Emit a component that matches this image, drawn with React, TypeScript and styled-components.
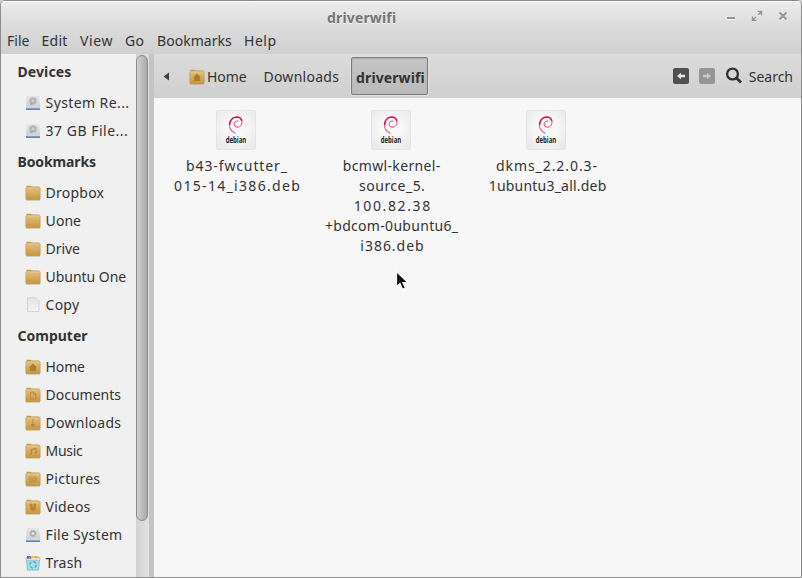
import React from 'react';
import styled, { createGlobalStyle } from 'styled-components';

const GlobalStyle = createGlobalStyle`
  html, body { margin: 0; background: #d0d0d0; }
  * { box-sizing: border-box; }
`;

const Window = styled.main`
  position: relative;
  display: flex;
  flex-direction: column;
  width: 802px;
  height: 578px;
  overflow: hidden;
  border: 1px solid #8d8d8d;
  border-radius: 5px 5px 0 0;
  background: #f7f7f7;
  color: #333;
  font: 14px/20px 'Noto Sans', 'Open Sans', sans-serif;
  white-space: nowrap;
  cursor: default;
`;

const Header = styled.header`
  flex: 0 0 53px;
  background: linear-gradient(#ececec, #dcdcdc 45%, #d0d0d0);
  box-shadow: inset 0 1px #fbfbfb;
`;

const TitleBar = styled.div`
  display: flex;
  height: 27px;
  padding: 7px 12px 0 326px;
  color: #757575;
`;

const Title = styled.h1`
  flex: 1;
  margin: 0;
  font-size: 14px;
  line-height: 20px;
  letter-spacing: 0.16px;
  text-shadow: 0 1px #f4f4f4;
`;

const WindowButtons = styled.div`
  display: flex;
  align-items: center;
  gap: 14px;
  height: 15px;
  svg { display: block; }
`;

const MenuBar = styled.nav`
  display: flex;
  height: 26px;
  padding-left: 6px;
  line-height: 26px;
`;

const MenuItem = styled.span<{ $width: number; $spacing: number }>`
  width: ${p => p.$width}px;
  letter-spacing: ${p => p.$spacing}px;
`;

const Body = styled.div`
  display: flex;
  flex: 1;
  min-height: 0;
`;

const Sidebar = styled.aside`
  flex: 0 0 135px;
  padding-top: 1px;
  overflow: hidden;
  background: #f0f0f0;
`;

const SectionTitle = styled.h2<{ $spacing: number }>`
  height: 34px;
  margin: 0;
  padding: 0 0 0 16.500px;
  font-size: 14px;
  line-height: 34px;
  letter-spacing: ${p => p.$spacing}px;
`;

const PlaceRow = styled.div`
  display: flex;
  align-items: center;
  gap: 4.600px;
  height: 28px;
  padding-left: 24px;
  line-height: 28px;
`;

const Label = styled.span<{ $spacing: number }>`
  letter-spacing: ${p => p.$spacing}px;
`;

const ScrollTrack = styled.div`
  flex: 0 0 13px;
  padding: 1px 1px 0 0;
  background: linear-gradient(90deg, #d2d2d2, #e2e2e2);
`;

const ScrollThumb = styled.div`
  width: 12px;
  height: 466px;
  border: 1px solid #8b8b8b;
  border-radius: 6px;
  background: linear-gradient(90deg, #d0d0d0, #a9a9a9);
`;

const Splitter = styled.div`
  flex: 0 0 5px;
  background: #c4c4c4;
`;

const MainPane = styled.section`
  flex: 1;
  min-width: 0;
`;

const PathToolbar = styled.div`
  display: flex;
  align-items: center;
  height: 44px;
  padding: 0 8px 0 9px;
  background: linear-gradient(#dcdcdc, #cfcfcf);
`;

const Crumb = styled.div`
  display: flex;
  align-items: center;
  gap: 2px;
  margin-right: 17px;
  padding-top: 1px;
`;

const ActiveCrumb = styled.div`
  width: 77px;
  height: 38px;
  margin-left: -5px;
  padding-left: 4px;
  border: 1px solid #7b7b7b;
  border-radius: 2px;
  background: linear-gradient(#c5c5c5, #bababa);
  box-shadow: 0 0 0 1px #e1e1e1, inset 0 1px 2px #b0b0b0;
  font-weight: 700;
  line-height: 40px;
  letter-spacing: 0.1px;
`;

const BackArrow = styled.svg`
  margin-right: 19px;
`;

const ToolbarActions = styled.div`
  display: flex;
  align-items: center;
  margin-left: auto;
  svg { display: block; }
`;

const NavButton = styled.span<{ $disabled?: boolean }>`
  display: grid;
  place-items: center;
  width: 16px;
  height: 16px;
  margin: -1px 10px 0 0;
  border-radius: 2px;
  background: ${p => (p.$disabled ? '#959595' : '#505050')};
  color: ${p => (p.$disabled ? '#cacaca' : '#e8e8e8')};
`;

const SearchLabel = styled.span`
  margin: 2px 0 0 6px;
  letter-spacing: -0.02px;
`;

const FileGrid = styled.div`
  display: grid;
  grid-template-columns: repeat(3, 155px);
  padding: 12px 0 0 5px;
`;

const FileItem = styled.figure`
  display: flex;
  flex-direction: column;
  align-items: center;
  margin: 0;
`;

const PackageTile = styled.div`
  width: 40px;
  height: 40px;
  margin: 0 0 6px -1px;
  border: 1px solid #e4e4e4;
  border-radius: 2px;
  background: radial-gradient(circle at 50% 45%, #f8f8f8 35%, #e7e7e7);
  svg { display: block; margin: -1px; }
`;

const FileName = styled.figcaption`
  display: flex;
  flex-direction: column;
  align-items: center;
`;

const NameLine = styled.span<{ $spacing: number; $shift?: number }>`
  margin-left: ${p => p.$shift ?? 0}px;
  margin-right: ${p => -p.$spacing}px;
  letter-spacing: ${p => p.$spacing}px;
`;

const Pointer = styled.svg`
  position: absolute;
  left: 394px;
  top: 269px;
`;

type Emblem = 'home' | 'document' | 'download' | 'music' | 'picture' | 'video';
type IconKind = 'drive' | 'system' | 'file' | 'trash' | 'folder' | Emblem;

const emblems: Record<Emblem, React.ReactNode> = {
  home: <path d="M8 4.500 4 8.500h1V12h6V8.500h1Z" fill="#b07e2b" />,
  document: <path d="M5.500 5h3.300l2 2v5H5.500ZM8.500 5v2.300h2.300" fill="none" stroke="#bb8a38" />,
  download: <path d="M7.200 4.500h1.600v1H7.200ZM7.200 6.500h1.600v1H7.200ZM7.200 8.500h1.600v.7h2L8 12 5.200 9.200h2Z" fill="#b28030" />,
  music: <path d="M6.500 11V6.500l4.500-1V10M5 11h1.500M9.500 10H11" fill="none" stroke="#b98734" strokeWidth="1.200" />,
  picture: (
    <>
      <rect x="4.300" y="6" width="7.400" height="4.800" rx="1" fill="none" stroke="#bd8c3b" strokeWidth=".9" />
      <circle cx="9" cy="8.400" r="1.300" fill="none" stroke="#bb8936" />
      <path d="M6 7v3" stroke="#bd8c3b" />
    </>
  ),
  video: (
    <g fill="#b58433">
      <circle cx="6" cy="6" r="1.600" />
      <circle cx="9.800" cy="6" r="1.600" />
      <path d="M5 7.500h6v2.300l-2.500 2.400-3-1.500Z" />
    </g>
  ),
};

function PlaceIcon({ kind }: { kind: IconKind }) {
  if (kind === 'drive' || kind === 'system') {
    return (
      <svg width="16" height="16" viewBox="0 0 16 16">
        <path d="M1.800 1h12.400l.8 9.500v3.500H1v-3.500Z" fill="url(#metal)" />
        <path d="M1 11h14v2.700H1Z" fill="#d3d5d8" />
        <path d="M1 14.200h14" stroke="#3c609c" strokeWidth="1.200" />
        {kind === 'drive' ? (
          <>
            <circle cx="8" cy="6" r="3.800" fill="#b4b6b8" />
            <path d="m5.500 10 2-2.200" stroke="#a6a8aa" strokeWidth="1.500" />
            <circle cx="8" cy="5.800" r="1.300" fill="#d4d4d4" />
          </>
        ) : (
          <>
            <circle cx="8" cy="6.500" r="3.200" fill="none" stroke="#b3b5b7" strokeWidth="1.200" strokeDasharray="1.400 1.100" />
            <circle cx="8" cy="6.500" r="2.200" fill="#e6e6e6" stroke="#a2a4a6" strokeWidth="1.200" />
          </>
        )}
      </svg>
    );
  }
  if (kind === 'file') {
    return (
      <svg width="16" height="16" viewBox="0 0 16 16">
        <path d="M2.500 .8h9l2.500 2.500v11.200H2.500Z" fill="url(#paper)" stroke="#d2d3d0" />
        <path d="M11.500 .8V3.500H14" fill="#fff" stroke="#dddeda" />
      </svg>
    );
  }
  if (kind === 'trash') {
    return (
      <svg width="16" height="16" viewBox="0 0 16 16">
        <path d="M1.600 4h12.800l-.8 11H2.400Z" fill="#a3dfe9" stroke="#7fadb6" strokeWidth=".8" />
        <path d="M1 2.500h14v2.700H1Z" fill="#e2eded" stroke="#9aaeb0" strokeWidth=".6" />
        <path d="M5 1h9v2.200H5Z" fill="#edc450" />
        <path d="M2 1h3.200l1.300 2.800H2Z" fill="#4b74bb" />
        <path d="m4 2 1.500 1.300M10 1.500l1.500 1.400" stroke="#e07a4e" />
        <circle cx="8" cy="9.800" r="3.200" fill="none" stroke="#4c9cad" strokeWidth="1.200" strokeDasharray="3 2" />
      </svg>
    );
  }
  return (
    <svg width="16" height="16" viewBox="0 0 16 16">
      <path d="M1.500 .7h4.300l.7.800H14l.5 1v3h-13Z" fill="#c69d50" />
      <rect x=".8" y="2.300" width="14.400" height="12.400" rx="1" fill="url(#folder)" stroke="#bb9045" strokeWidth=".5" />
      <path d="M1.500 2.900h13" stroke="#ecd199" strokeWidth=".7" />
      <path d="M1 15h14" stroke="#a68d61" strokeWidth=".6" />
      {kind !== 'folder' && emblems[kind]}
    </svg>
  );
}

function SharedGradients() {
  return (
    <defs>
      <linearGradient id="folder" x2="0" y2="1"><stop stopColor="#dfc084" /><stop offset="1" stopColor="#c9963c" /></linearGradient>
      <linearGradient id="metal" x2="0" y2="1"><stop stopColor="#e6e6e6" /><stop offset="1" stopColor="#cbccce" /></linearGradient>
      <linearGradient id="paper" x2="0" y2="1"><stop stopColor="#e3e5e0" /><stop offset="1" stopColor="#f4f4f2" /></linearGradient>
    </defs>
  );
}

function DebianPackage() {
  return (
    <PackageTile>
      <svg width="40" height="40" viewBox="0 0 40 40">
        <path d="M19.500 23.500C15.500 21.500 13 17.800 13.500 13.700" fill="none" stroke="#e0648f" strokeWidth="1.100" />
        <path d="M13.600 15C13.300 10.500 16.500 7.200 20.500 7c2.700 0 4.800 1.500 5.300 4" fill="none" stroke="#d70a53" strokeWidth="1.500" />
        <path d="M25.900 10.500c.5 4-1.400 6.500-4 6.700-2.700.2-4.100-1.700-3.600-3.900.4-1.700 2-2.600 3.900-2.100" fill="none" stroke="#dc4177" strokeWidth="1" />
        <text x="9.700" y="33" textLength="20.600" lengthAdjust="spacingAndGlyphs" fontFamily="Open Sans, sans-serif" fontSize="8" fontWeight="700" fill="#222">debian</text>
      </svg>
    </PackageTile>
  );
}

const menu: [string, number, number][] = [
  ['File', 34.5, 0], ['Edit', 38.5, 0.26], ['View', 45, 0.62], ['Go', 32, 0.2], ['Bookmarks', 87, 0.04], ['Help', 35, 0.54],
];

const sections: { title: string; spacing: number; places: [IconKind, string, number][] }[] = [
  { title: 'Devices', spacing: 0.1, places: [['drive', 'System Re...', 0.4], ['drive', '37 GB File...', 0.5]] },
  {
    title: 'Bookmarks', spacing: -0.12,
    places: [['folder', 'Dropbox', 0.23], ['folder', 'Uone', 0.05], ['folder', 'Drive', -0.1], ['folder', 'Ubuntu One', -0.04], ['file', 'Copy', 0.22]],
  },
  {
    title: 'Computer', spacing: 0,
    places: [
      ['home', 'Home', -0.14], ['document', 'Documents', -0.01], ['download', 'Downloads', 0.26], ['music', 'Music', -0.29],
      ['picture', 'Pictures', 0.26], ['video', 'Videos', 0.2], ['system', 'File System', 0.3], ['trash', 'Trash', 0.21],
    ],
  },
];

const files: [string, number, number?][][] = [
  [['b43-fwcutter_', 0.87], ['015-14_i386.deb', 1.32, 1]],
  [['bcmwl-kernel-', 0.33], ['source_5.', 0.48, 1], ['100.82.38', 1.62, 1], ['+bdcom-0ubuntu6_', 0.31], ['i386.deb', 0.97, 1]],
  [['dkms_2.2.0.3-', 0.93], ['1ubuntu3_all.deb', 0.21, 2]],
];

export default function App() {
  return (
    <>
      <GlobalStyle />
      <Window>
        <Header>
          <TitleBar>
            <Title>driverwifi</Title>
            <WindowButtons>
              <svg width="12" height="12" viewBox="0 0 12 12"><path d="M2 9h8" stroke="#fafafa" strokeWidth="2" /><path d="M2 8h8" stroke="#939393" strokeWidth="2" /></svg>
              <svg width="12" height="12" viewBox="0 0 12 12" fill="none">
                <path d="M6.500 2.500h4v4M10.300 2.700 7 6M1.500 7.500v4h4M1.700 11.300 5 8" stroke="#fafafa" strokeWidth="1.300" />
                <path d="M6.500 1.500h4v4M10.300 1.700 7 5M1.500 6.500v4h4M1.700 10.300 5 7" stroke="#939393" strokeWidth="1.400" />
              </svg>
              <svg width="12" height="12" viewBox="0 0 12 12" fill="none">
                <path d="m2.500 3.500 7 7m0-7-7 7" stroke="#fafafa" strokeWidth="2" />
                <path d="m2.500 2.500 7 7m0-7-7 7" stroke="#939393" strokeWidth="2" />
              </svg>
            </WindowButtons>
          </TitleBar>
          <MenuBar>
            {menu.map(([name, width, spacing]) => <MenuItem key={name} $width={width} $spacing={spacing}>{name}</MenuItem>)}
          </MenuBar>
        </Header>
        <Body>
          <Sidebar>
            {sections.map(section => (
              <React.Fragment key={section.title}>
                <SectionTitle $spacing={section.spacing}>{section.title}</SectionTitle>
                {section.places.map(([kind, name, spacing]) => (
                  <PlaceRow key={name}><PlaceIcon kind={kind} /><Label $spacing={spacing}>{name}</Label></PlaceRow>
                ))}
              </React.Fragment>
            ))}
          </Sidebar>
          <ScrollTrack><ScrollThumb /></ScrollTrack>
          <Splitter />
          <MainPane>
            <PathToolbar>
              <BackArrow width="7" height="9" viewBox="0 0 7 9"><path d="M6 .5v8L.5 4.500Z" fill="#3e3e3e" /></BackArrow>
              <Crumb><PlaceIcon kind="home" /><Label $spacing={-0.1}>Home</Label></Crumb>
              <Crumb><Label $spacing={0.26}>Downloads</Label></Crumb>
              <ActiveCrumb>driverwifi</ActiveCrumb>
              <ToolbarActions>
                <NavButton><svg width="10" height="8" viewBox="0 0 10 8"><path d="M1 4 5 .8v2h4v2.400H5v2Z" fill="currentColor" /></svg></NavButton>
                <NavButton $disabled><svg width="10" height="8" viewBox="0 0 10 8"><path d="M9 4 5 .8v2H1v2.400h4v2Z" fill="currentColor" /></svg></NavButton>
                <svg width="18" height="18" viewBox="0 0 18 18" fill="none" stroke="#303030">
                  <circle cx="7.500" cy="7" r="5.400" strokeWidth="2.300" />
                  <path d="m11.500 11 4.500 4.500" strokeWidth="2.800" />
                </svg>
                <SearchLabel>Search</SearchLabel>
              </ToolbarActions>
            </PathToolbar>
            <FileGrid>
              {files.map(lines => (
                <FileItem key={lines[0][0]}>
                  <DebianPackage />
                  <FileName>
                    {lines.map(([text, spacing, shift]) => <NameLine key={text} $spacing={spacing} $shift={shift}>{text}</NameLine>)}
                  </FileName>
                </FileItem>
              ))}
            </FileGrid>
          </MainPane>
        </Body>
        <Pointer width="15" height="21" viewBox="0 0 15 21">
          <path d="M1.500 1.500v15.300l3.500-3.300 2.500 5.800 2.900-1.300-2.500-5.500h5Z" fill="#111" stroke="#fff" strokeWidth="1.200" />
        </Pointer>
        <svg width="0" height="0"><SharedGradients /></svg>
      </Window>
    </>
  );
}
